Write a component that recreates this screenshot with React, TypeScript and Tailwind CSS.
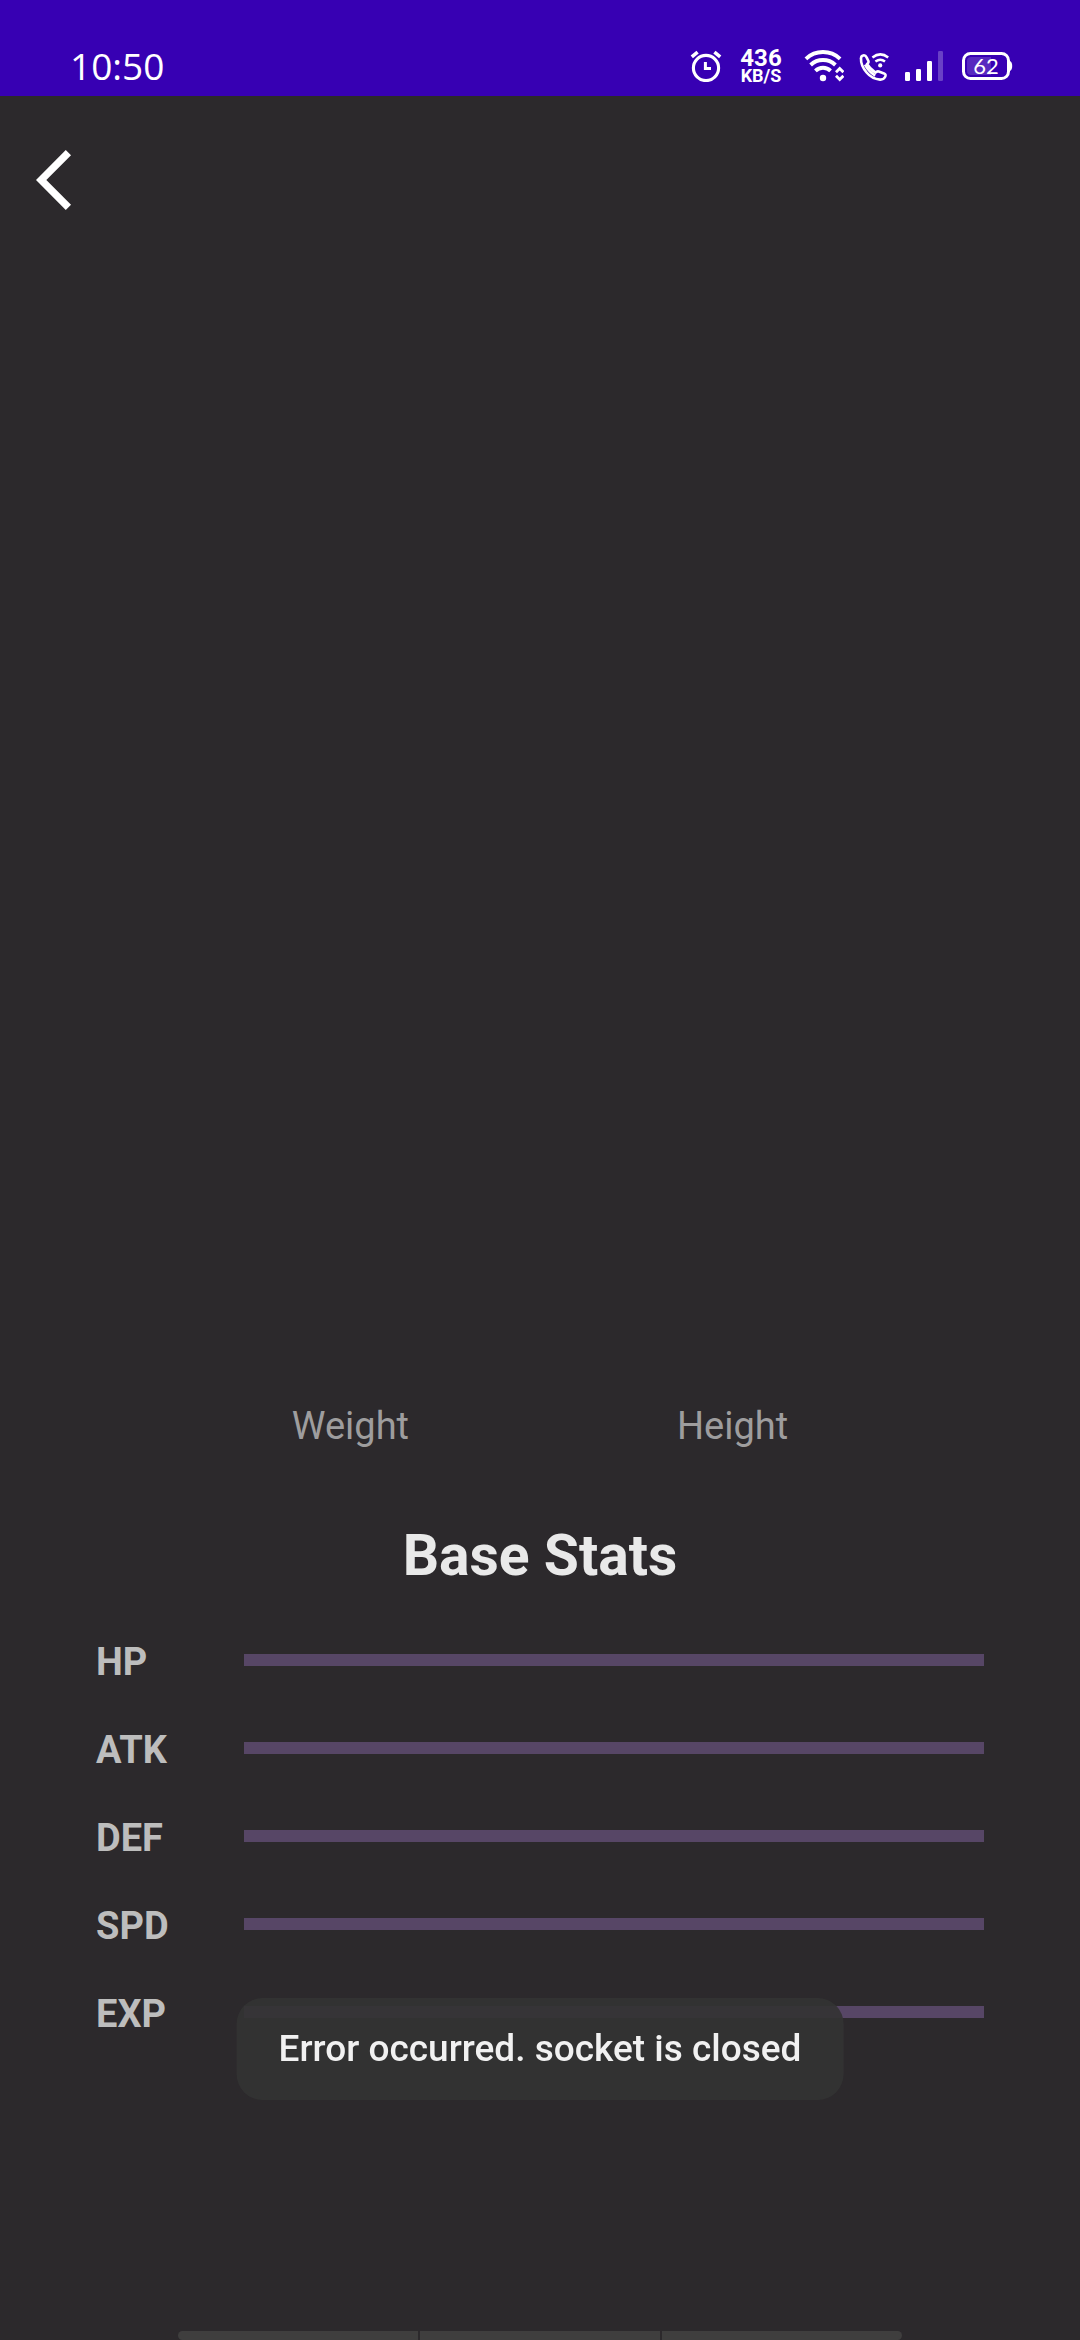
const stats = ["HP", "ATK", "DEF", "SPD", "EXP"];

function AlarmIcon() {
  return (
    <svg className="h-8 w-8" viewBox="0 0 32 32" fill="none" stroke="currentColor" aria-label="Alarm set">
      <circle cx="16" cy="18" r="12.6" strokeWidth="3.1" />
      <path d="M15.4 12v6.6h5.6" strokeWidth="3" />
      <path d="M1.8 6.8L7.6 2.2M30.2 6.8L24.4 2.2" strokeWidth="3.6" />
    </svg>
  );
}

function WifiIcon() {
  return (
    <svg className="h-8 w-10" viewBox="0 0 40 32" fill="none" stroke="currentColor" aria-label="Wi-Fi">
      <path d="M1.9 8.8a25 25 0 0 1 34.2 0" strokeWidth="3.9" />
      <path d="M6.6 15a18 18 0 0 1 24.8 0" strokeWidth="3.9" />
      <path d="M11.4 20.8a11 11 0 0 1 15.2 0" strokeWidth="3.9" />
      <circle cx="19" cy="28" r="3.2" fill="currentColor" stroke="none" />
      <path d="M32 22.2l3.7-3.7 3.7 3.7M32 25.8l3.7 3.7 3.7-3.7" strokeWidth="2.8" />
    </svg>
  );
}

function WifiCallIcon() {
  return (
    <svg className="h-8 w-8" viewBox="0 0 32 32" fill="none" stroke="currentColor" strokeWidth="2.6" strokeLinejoin="round" aria-label="Wi-Fi calling">
      <path d="M3 8.4Q3 5.4 6 5.2q1.6 0 2.6 2.2l1.8 3.6q.6 1.6-1.4 3 2.5 4.5 8.5 8.6 1.5-1.6 3.3-1l5.2 1.8q2.6 1.2 1 3.6-1.5 2.8-5 2.6-8-.6-13.4-7.1Q2.6 15.5 3 8.4z" />
      <path d="M7 14.6q3.8 7 10.2 11" strokeWidth="2.6" />
      <path d="M14.4 7.4q8-6 15.8 0M17.4 11.6q5-3.6 9.6 0" strokeWidth="2.5" strokeLinejoin="miter" />
      <circle cx="22.2" cy="15.4" r="2.1" fill="currentColor" stroke="none" />
    </svg>
  );
}

function SignalIcon() {
  return (
    <svg className="h-8 w-10" viewBox="0 0 40 32" fill="currentColor" aria-label="Mobile signal">
      <rect x="1" y="22" width="5" height="9" rx="1.2" />
      <rect x="12" y="19" width="5" height="12" rx="1.2" />
      <rect x="23" y="11" width="5" height="20" rx="1.2" />
      <rect x="34" y="1" width="5" height="30" rx="1.2" opacity="0.25" />
    </svg>
  );
}

function Battery() {
  return (
    <div className="relative flex h-8 w-[52px] items-center">
      <svg className="h-8 w-[52px]" viewBox="0 0 52 32" fill="none" aria-hidden="true">
        <rect x="2.5" y="3.5" width="45" height="25" rx="7" stroke="currentColor" strokeWidth="3" />
        <path d="M49 11q2.2 1 2.2 5t-2.2 5z" fill="currentColor" />
        <path d="M10 7h20v18H10q-4 0-4-4V11q0-4 4-4z" fill="currentColor" opacity="0.16" />
      </svg>
      <span className="absolute inset-x-0 pr-0.5 text-center font-['Lato'] text-[22px] leading-8">62</span>
    </div>
  );
}

function StatusBar() {
  return (
    <header className="flex h-24 items-center justify-between bg-[#3700b3] pt-9 pr-[67px] pl-[70px] text-white">
      <time className="font-['Open_Sans',sans-serif] text-[37px] leading-[58px]">10:50</time>
      <div className="flex items-center">
        <AlarmIcon />
        <div className="ml-[18px] flex w-[42px] flex-col items-center font-bold">
          <span className="text-[24px] leading-[20px]">436</span>
          <span className="text-[18px] leading-[16px]">KB/S</span>
        </div>
        <div className="ml-[22px] flex items-center gap-[14px]">
          <WifiIcon />
          <WifiCallIcon />
          <SignalIcon />
        </div>
        <div className="ml-[17px]">
          <Battery />
        </div>
      </div>
    </header>
  );
}

export default function App() {
  return (
    <div className="flex min-h-screen flex-col bg-[#2c292c] font-['Roboto',sans-serif]">
      <StatusBar />
      <main className="flex flex-1 flex-col">
        <div className="flex-1 px-9 pt-[54px] pb-12">
          <button type="button" aria-label="Back" className="block text-white">
            <svg className="h-[60px] w-9" viewBox="0 0 36 60" fill="none" stroke="currentColor" strokeWidth="7.4">
              <path d="M32.4 2.6L5.2 30l27.2 27.4" />
            </svg>
          </button>
        </div>
        <div className="flex justify-center gap-[268px] text-[38px] leading-[52px] text-[#9e9d9e]">
          <span>Weight</span>
          <span>Height</span>
        </div>
        <h1 className="mt-[66px] text-center text-[57px] leading-[76px] font-bold text-[#e9e9e9]">Base Stats</h1>
        <ul className="mt-[42px] mb-[291px] flex flex-col gap-9 px-24">
          {stats.map((name) => (
            <li key={name} className="flex items-center">
              <span className="w-[148px] text-[38px] leading-[52px] font-bold text-[#bdbdbd]">{name}</span>
              <div role="progressbar" aria-label={name} aria-valuenow={0} className="mb-1 h-3 flex-1 bg-[#574666]" />
            </li>
          ))}
        </ul>
      </main>
      <div
        role="status"
        className="fixed bottom-60 left-1/2 -translate-x-1/2 rounded-[26px] bg-[#333333]/92 px-[42px] py-[25px] text-[37px] leading-[52px] font-medium whitespace-nowrap text-[#f1f1f1]"
      >
        Error occurred. socket is closed
      </div>
      <div className="mx-[178px] grid h-[9px] grid-cols-3 gap-0.5 overflow-hidden rounded-md">
        <div className="bg-[#3f3e3e]" />
        <div className="bg-[#3f3e3e]" />
        <div className="bg-[#3f3e3e]" />
      </div>
    </div>
  );
}
